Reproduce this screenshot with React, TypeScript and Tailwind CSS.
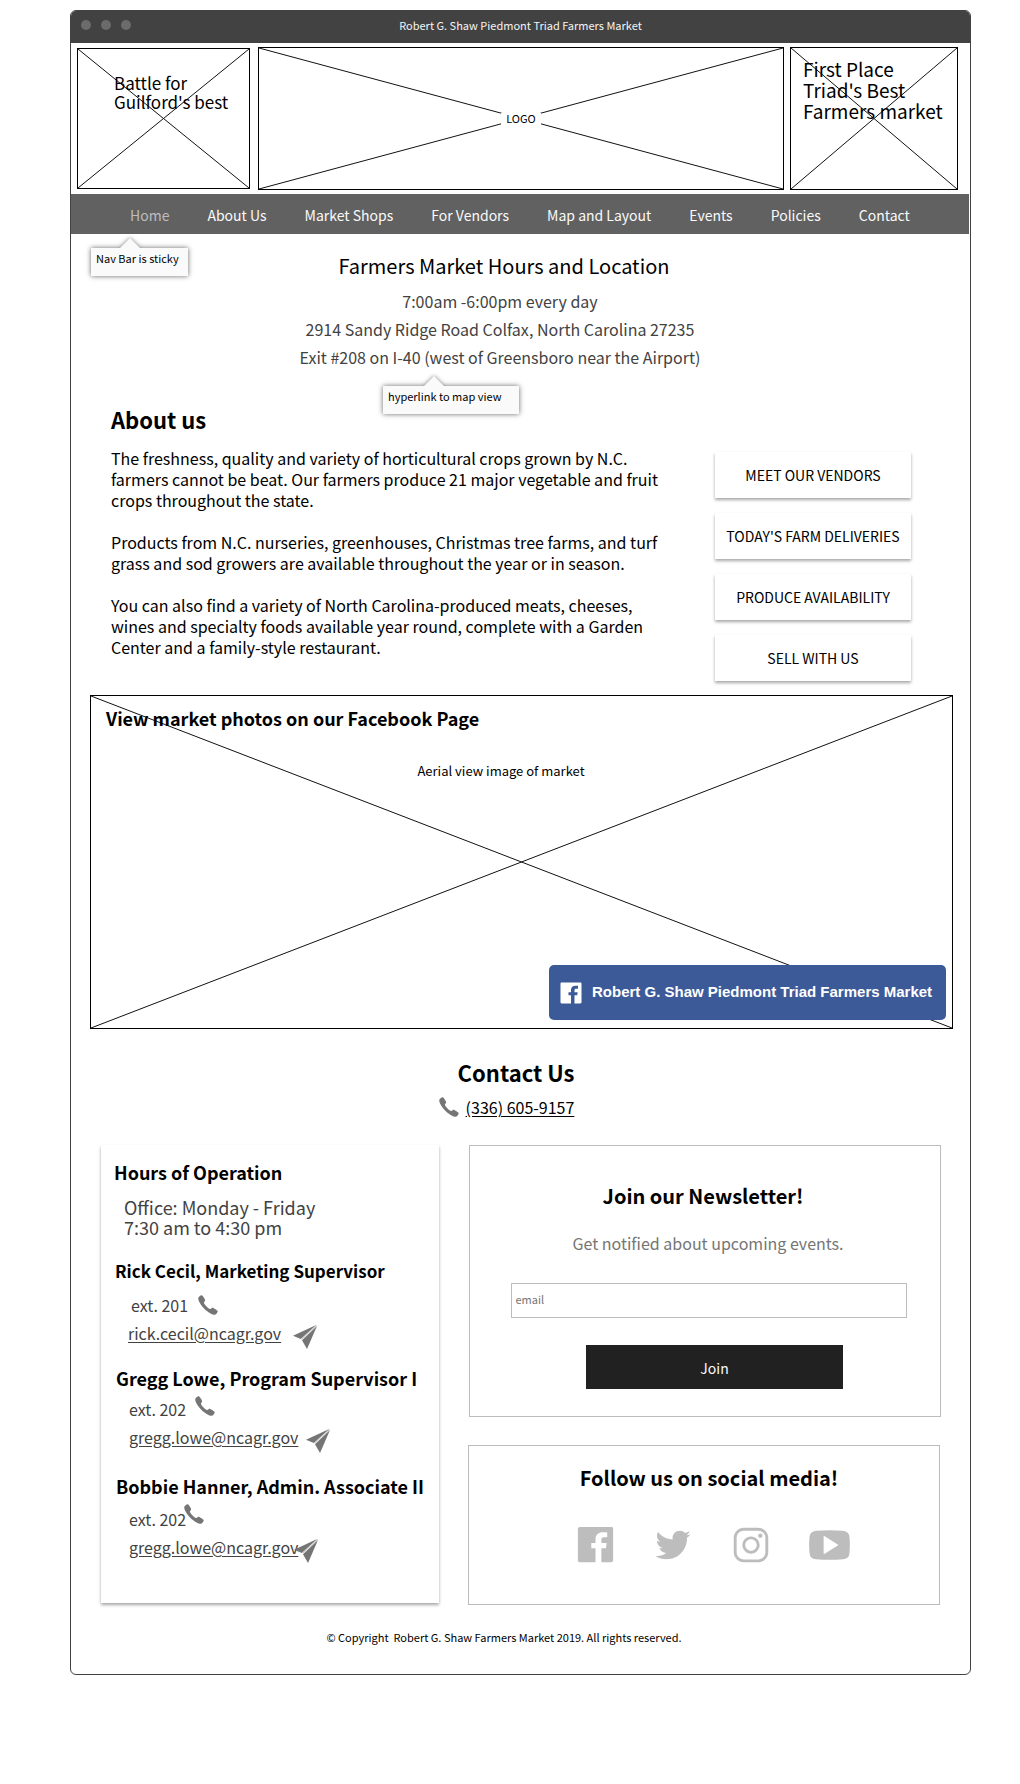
import type { ReactNode } from "react";
import { IoIosCall, IoLogoFacebook, IoLogoTwitter, IoLogoInstagram } from "react-icons/io";

const navItems = [
  "Home",
  "About Us",
  "Market Shops",
  "For Vendors",
  "Map and Layout",
  "Events",
  "Policies",
  "Contact",
];

const actions = [
  "MEET OUR VENDORS",
  "TODAY'S FARM DELIVERIES",
  "PRODUCE AVAILABILITY",
  "SELL WITH US",
];

function Placeholder({ className, children }: { className: string; children?: ReactNode }) {
  return (
    <div className={`relative border border-black ${className}`}>
      <svg className="absolute inset-0 h-full w-full" aria-hidden="true">
        <line x1="0" y1="0" x2="100%" y2="100%" stroke="#111" />
        <line x1="0" y1="100%" x2="100%" y2="0" stroke="#111" />
      </svg>
      {children}
    </div>
  );
}

function Callout({ className, arrow, children }: { className: string; arrow: string; children: ReactNode }) {
  return (
    <div
      role="note"
      className={`absolute h-[28px] bg-[#fafafa] pl-[5px] text-[11px] leading-[20px] shadow-[0_0_5px_rgba(0,0,0,0.6)] ${className}`}
    >
      <svg className={`absolute -top-[14px] h-[14px] w-[28px] ${arrow}`} viewBox="0 0 28 14" aria-hidden="true">
        <path d="M4 14 14 4 24 14Z" fill="#fafafa" className="drop-shadow-[0_0_2px_rgba(0,0,0,0.5)]" />
      </svg>
      {children}
    </div>
  );
}

function PaperPlane({ className }: { className: string }) {
  return (
    <svg viewBox="0 0 24 24" className={`mt-1 -mb-1 size-6 shrink-0 fill-[#757575] ${className}`} aria-hidden="true">
      <path d="M23.2 0 0 10.8 7.8 14Z" />
      <path d="M24 1 9 15.2 14 24Z" />
      <path d="M23.6.4 8.6 14.4" stroke="#757575" strokeWidth="0.4" />
    </svg>
  );
}

function YoutubeMark() {
  return (
    <svg viewBox="0 0 118 87" className="h-[30px] w-[41px]" fill="currentColor" aria-hidden="true">
      <path
        fillRule="evenodd"
        d="M20 2Q59-1 98 2Q116 4 117 20Q119 43 117 67Q116 84 98 85Q59 88 20 85Q2 84 1 67Q-1 43 1 20Q2 4 20 2ZM42 19V68Q42 70 45 69L83 45Q85 43 83 42L45 18Q42 17 42 19Z"
      />
    </svg>
  );
}

function Person({
  name,
  ext,
  email,
  className,
  extRow,
  phone,
  plane,
}: {
  name: string;
  ext: string;
  email: string;
  className: string;
  extRow: string;
  phone: string;
  plane: string;
}) {
  return (
    <section className={className}>
      <h4 className="leading-[24px] font-bold whitespace-nowrap text-black">{name}</h4>
      <div className={`flex items-center text-[16px] leading-[28px] ${extRow}`}>
        <span>ext. {ext}</span>
        <IoIosCall className={`size-[26px] text-[#757575] ${phone}`} />
      </div>
      <div className="flex items-center pl-[13px] text-[16px] leading-[28px]">
        <a href={`mailto:${email}`} className="underline underline-offset-2">
          {email}
        </a>
        <PaperPlane className={plane} />
      </div>
    </section>
  );
}

export default function App() {
  return (
    <div className="min-h-screen bg-white pt-[10px] pr-[49px] pb-[110px] pl-[70px] font-['Noto_Sans_CJK_SC',sans-serif] text-black">
      <div className="overflow-hidden rounded-[6px] border border-[#424242]">
        <div className="relative flex h-8 items-center justify-center bg-[#424242] pb-[4px]">
          <div className="absolute left-[10px] flex gap-[10px]">
            <span className="size-[10px] rounded-full bg-[#6b6b6b]" />
            <span className="size-[10px] rounded-full bg-[#6b6b6b]" />
            <span className="size-[10px] rounded-full bg-[#6b6b6b]" />
          </div>
          <span className="text-[11px] leading-4 text-[#f5f5f5]">Robert G. Shaw Piedmont Triad Farmers Market</span>
        </div>

        <header className="flex items-center pt-1 pr-3 pb-1 pl-[6px]">
          <Placeholder className="h-[141px] w-[173px] pt-6 pl-9">
            <p className="relative text-[17px] leading-[19px]">
              Battle for
              <br />
              Guilford's best
            </p>
          </Placeholder>
          <Placeholder className="mr-[6px] ml-2 flex h-[143px] flex-1 items-center justify-center">
            <span className="relative bg-white px-[5px] pb-[2px] text-[11px] leading-[10px]">LOGO</span>
          </Placeholder>
          <Placeholder className="h-[143px] w-[168px] pt-[10px] pl-3">
            <p className="relative text-[19px] leading-[21px]">
              First Place
              <br />
              Triad's Best
              <br />
              Farmers market
            </p>
          </Placeholder>
        </header>

        <nav className="sticky top-0 mr-px flex h-10 items-center gap-[38px] bg-[#616161] pt-[2px] pl-[59px] text-[14px] whitespace-nowrap text-[#fafafa]">
          {navItems.map((item) => (
            <a key={item} href="#" className={item === "Home" ? "text-[#bdbdbd]" : ""}>
              {item}
            </a>
          ))}
        </nav>

        <main className="relative">
          <Callout className="top-[14px] left-5 w-[97px]" arrow="left-[25px]">
            Nav Bar is sticky
          </Callout>
          <Callout className="top-[152px] left-[312px] w-[136px]" arrow="left-[37px]">
            hyperlink to map view
          </Callout>

          <section className="pt-[18px] pr-[41px] text-center text-[16px] leading-7 text-[#424242]">
            <h1 className="mb-[7px] pl-2 text-[20px] text-black">Farmers Market Hours and Location</h1>
            <p>7:00am -6:00pm every day</p>
            <p>2914 Sandy Ridge Road Colfax, North Carolina 27235</p>
            <p>Exit #208 on I-40 (west of Greensboro near the Airport)</p>
          </section>

          <section className="mt-[34px] flex pr-[59px] pl-10">
            <div className="flex-1">
              <h2 className="mb-[15px] text-[22px] leading-7 font-bold">About us</h2>
              <div className="flex max-w-[555px] flex-col gap-[21px] text-[16px] leading-[21px]">
                <p>
                  The freshness, quality and variety of horticultural crops grown by N.C. farmers cannot be beat. Our
                  farmers produce 21 major vegetable and fruit crops throughout the state.
                </p>
                <p>
                  Products from N.C. nurseries, greenhouses, Christmas tree farms, and turf grass and sod growers are
                  available throughout the year or in season.
                </p>
                <p>
                  You can also find a variety of North Carolina-produced meats, cheeses, wines and specialty foods
                  available year round, complete with a Garden Center and a family-style restaurant.
                </p>
              </div>
            </div>
            <div className="mt-[47px] flex w-[196px] flex-col gap-[15px]">
              {actions.map((label) => (
                <button
                  key={label}
                  type="button"
                  className="h-[46px] bg-white text-[14px] shadow-[0_2px_3px_rgba(0,0,0,0.35)]"
                >
                  {label}
                </button>
              ))}
            </div>
          </section>

          <Placeholder className="mt-[14px] mr-[17px] ml-[19px] h-[334px] pt-[10px]">
            <h3 className="relative pl-[15px] text-[18px] leading-6 font-bold">
              View market photos on our Facebook Page
            </h3>
            <p className="relative pt-[31px] pr-[41px] text-center text-[13px] leading-5">
              Aerial view image of market
            </p>
            <a
              href="#"
              className="absolute right-[6px] bottom-2 flex h-[55px] w-[397px] items-center rounded-[5px] bg-[#3d5a98] font-['Liberation_Sans',sans-serif] text-[15px] font-bold whitespace-nowrap text-white"
            >
              <IoLogoFacebook className="mr-[7px] ml-[8px] size-[28px]" />
              Robert G. Shaw Piedmont Triad Farmers Market
            </a>
          </Placeholder>

          <section className="flex flex-col items-center pt-[29px] pr-[9px]">
            <h2 className="text-[22px] leading-7 font-bold">Contact Us</h2>
            <div className="mt-[7px] mr-[22px] flex items-center text-[16px] leading-7">
              <IoIosCall className="mr-1 size-[26px] text-[#757575]" />
              <a href="tel:+13366059157" className="underline underline-offset-2">
                (336) 605-9157
              </a>
            </div>
          </section>

          <div className="mt-6 flex pr-[29px] pl-[30px] text-[#424242]">
            <section className="h-[458px] w-[338px] bg-white pt-[15px] pl-[13px] shadow-[0_2px_3px_rgba(0,0,0,0.35)]">
              <h3 className="text-[18px] leading-6 font-bold text-black">Hours of Operation</h3>
              <p className="mt-[13px] pl-[10px] text-[18px] leading-5">
                Office: Monday - Friday
                <br />
                7:30 am to 4:30 pm
              </p>
              <Person
                name="Rick Cecil, Marketing Supervisor"
                ext="201"
                email="rick.cecil@ncagr.gov"
                className="mt-[22px] pl-px text-[17px]"
                extRow="mt-[8px] pl-[16px]"
                phone="ml-[7px]"
                plane="ml-3"
              />
              <Person
                name="Gregg Lowe, Program Supervisor I"
                ext="202"
                email="gregg.lowe@ncagr.gov"
                className="mt-[19px] pl-[2px] text-[18px]"
                extRow="mt-[5px] pl-[13px]"
                phone="-mt-[6px] ml-[6px]"
                plane="ml-2"
              />
              <Person
                name="Bobbie Hanner, Admin. Associate II"
                ext="202"
                email="gregg.lowe@ncagr.gov"
                className="mt-[23px] pl-[2px] text-[18px]"
                extRow="mt-[7px] pl-[13px]"
                phone="-mt-[10px] -ml-[5px]"
                plane="-ml-1"
              />
            </section>

            <div className="ml-[29px] flex flex-1 flex-col gap-7">
              <form
                className="ml-px flex h-[272px] flex-col items-center border border-[#bdbdbd] pt-[36px]"
                onSubmit={(event) => event.preventDefault()}
              >
                <h3 className="pr-1 text-[20px] leading-7 font-bold text-black">Join our Newsletter!</h3>
                <p className="mt-[19px] pl-[6px] text-[16px] leading-7 text-[#757575]">
                  Get notified about upcoming events.
                </p>
                <input
                  type="email"
                  aria-label="email"
                  placeholder="email"
                  className="mt-[26px] ml-[7px] h-[35px] w-[396px] border border-[#bdbdbd] pb-[3px] pl-1 text-[11px] placeholder:text-[#757575]"
                />
                <button
                  type="submit"
                  className="mt-[27px] ml-[19px] h-[44px] w-[257px] bg-[#212121] pt-[2px] text-[14px] text-[#fafafa]"
                >
                  Join
                </button>
              </form>
              <section className="mr-px flex h-[160px] flex-col items-center border border-[#bdbdbd] pt-[18px]">
                <h3 className="pl-[10px] text-[20px] leading-7 font-bold text-black">Follow us on social media!</h3>
                <div className="mt-[29px] ml-[16px] flex gap-[31px] text-[#bdbdbd] *:flex *:size-[47px] *:items-center *:justify-center">
                  <a href="#" aria-label="Facebook">
                    <IoLogoFacebook className="size-[47px]" />
                  </a>
                  <a href="#" aria-label="Twitter">
                    <IoLogoTwitter className="size-[38px]" />
                  </a>
                  <a href="#" aria-label="Instagram">
                    <IoLogoInstagram className="size-[46px]" />
                  </a>
                  <a href="#" aria-label="YouTube">
                    <YoutubeMark />
                  </a>
                </div>
              </section>
            </div>
          </div>

          <footer className="pt-[24px] pr-[33px] pb-[29px] text-center text-[11px] leading-4">
            © Copyright&nbsp; Robert G. Shaw Farmers Market 2019. All rights reserved.
          </footer>
        </main>
      </div>
    </div>
  );
}
